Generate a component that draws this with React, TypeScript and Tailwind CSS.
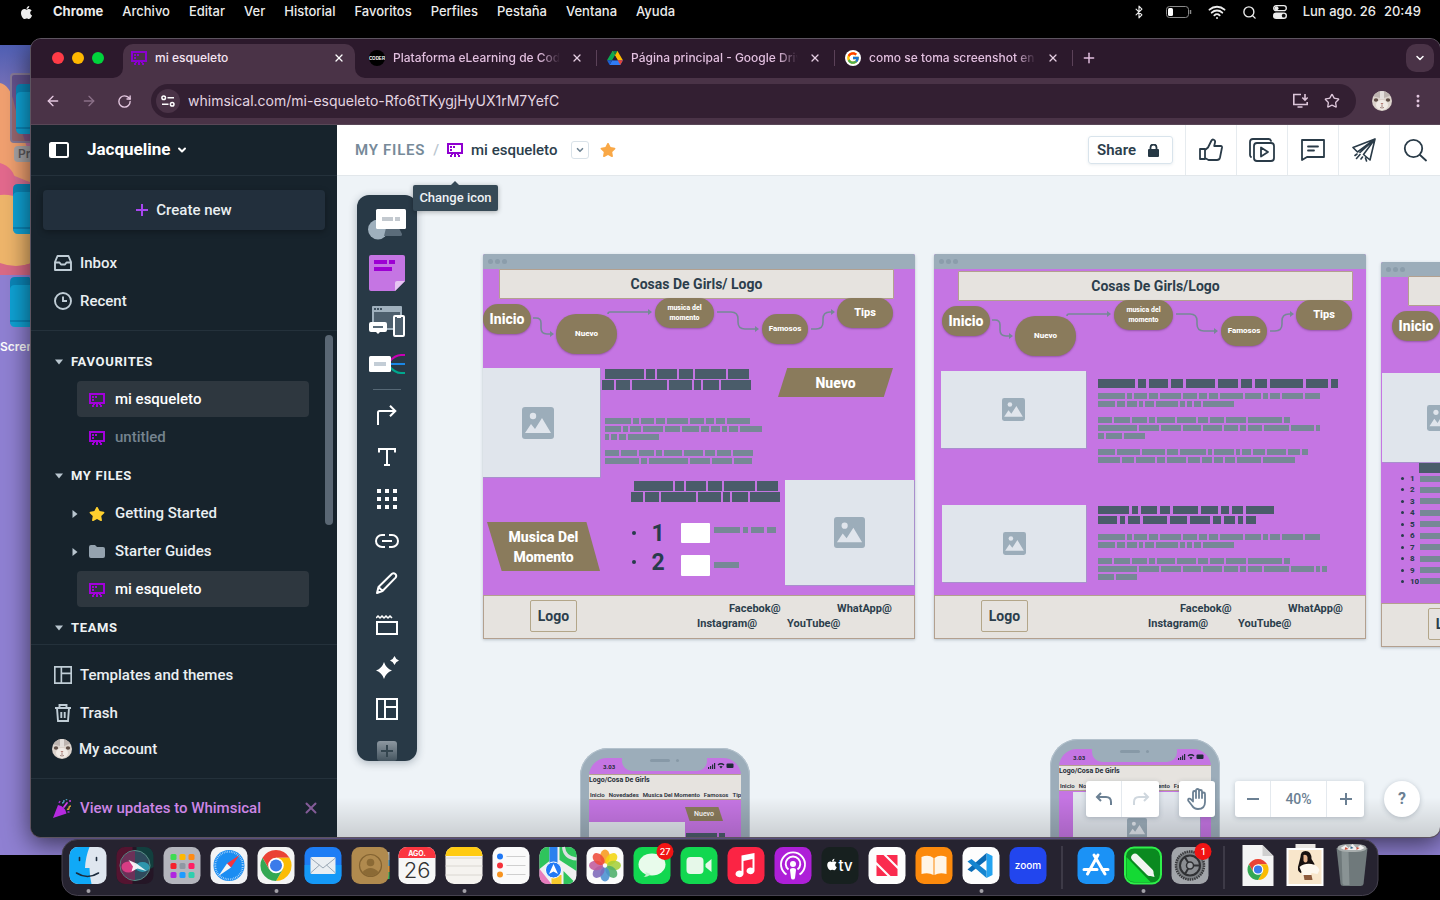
import React from "react";
import type { ReactNode } from "react";
import {
  ArrowLeft,
  ArrowRight,
  Bluetooth,
  ChevronDown,
  MoreVertical,
  Plus,
  RotateCw,
  Search,
  Star,
  Wifi,
  X,
} from "lucide-react";
import { FaApple, FaStar } from "react-icons/fa";
import { FcGoogle } from "react-icons/fc";

/* ---------- shared drawings ---------- */

function BoardIcon({ className = "" }: { className?: string }) {
  return (
    <svg viewBox="0 0 16 14" className={`h-[14px] w-4 shrink-0 ${className}`} fill="currentColor" shapeRendering="crispEdges" aria-hidden="true">
      <path fillRule="evenodd" d="M0 0h16v11H0zM2 2v7h12V2z" />
      <path d="M3 3h2v2H3zM6 3h2v2H6zM3 6h2v2H3zM4 11h2v1H5v2H3v-2h1zM7 11h2v3H7zM10 11h2v1h1v2h-2v-2h-1z" />
    </svg>
  );
}

function CatAvatar({ className = "" }: { className?: string }) {
  return (
    <svg viewBox="0 0 20 20" className={className} aria-hidden="true">
      <defs>
        <clipPath id="cat-clip"><circle cx="10" cy="10" r="10" /></clipPath>
      </defs>
      <g clipPath="url(#cat-clip)">
        <rect width="20" height="20" fill="#dcd3cc" />
        <path d="M0 0h20v4L12 7 10 3 8 7 0 5z" fill="#bdb4b0" />
        <path d="M8 0h4v8H8z" fill="#e4dfdc" />
        <ellipse cx="4" cy="9" rx="2.200" ry="1.700" fill="#5f4e46" />
        <ellipse cx="16" cy="9" rx="2.200" ry="1.700" fill="#5f4e46" />
        <ellipse cx="10" cy="14" rx="6" ry="5" fill="#f1ebe6" />
        <path d="M8.500 12h3L10 14z" fill="#b07c76" />
        <path d="M10 14v2M8 16.500q2 1 4 0" stroke="#8e6b66" strokeWidth=".8" fill="none" />
      </g>
    </svg>
  );
}

function TemplatesIcon({ className = "" }: { className?: string }) {
  return (
    <svg viewBox="0 0 22 22" className={className} fill="none" stroke="currentColor" strokeWidth="2" aria-hidden="true">
      <path d="M1 1h20v20H1zM9 1v20M9 9h12" />
    </svg>
  );
}

function ImageIcon({ className = "" }: { className?: string }) {
  return (
    <svg viewBox="0 0 32 32" className={className} aria-hidden="true">
      <rect width="32" height="32" rx="3" fill="#9cadba" />
      <circle cx="11" cy="9" r="3.200" fill="#e0e5ec" />
      <path d="M3 26l6-9 4 5 7-11 9 15z" fill="#e0e5ec" />
    </svg>
  );
}

function ChromeMark() {
  return (
    <g>
      <path d="M24 13H43.050A22 22 0 0 0 4.950 13L14.470 29.500 24 24z" fill="#ea4335" />
      <path d="M24 13H43.050A22 22 0 0 0 4.950 13L14.470 29.500 24 24z" fill="#fbbc04" transform="rotate(120 24 24)" />
      <path d="M24 13H43.050A22 22 0 0 0 4.950 13L14.470 29.500 24 24z" fill="#34a853" transform="rotate(240 24 24)" />
      <circle cx="24" cy="24" r="11" fill="#fff" />
      <circle cx="24" cy="24" r="8.500" fill="#3b7bea" />
    </g>
  );
}

/* ---------- macOS menu bar ---------- */

const MENUS = ["Archivo", "Editar", "Ver", "Historial", "Favoritos", "Perfiles", "Pestaña", "Ventana", "Ayuda"];

function MenuBar() {
  return (
    <header className="flex h-6 items-center justify-between pl-[19px] pr-[19px] text-[13px] font-medium text-[#ececec]">
      <nav className="flex items-center gap-[19px]">
        <FaApple className="size-[15px]" />
        <button className="font-bold">Chrome</button>
        {MENUS.map((m) => (
          <button key={m}>{m}</button>
        ))}
      </nav>
      <div className="flex items-center gap-4">
        <Bluetooth className="mr-1 size-[14px]" />
        <svg viewBox="0 0 26 12" className="h-3 w-[26px]" aria-hidden="true">
          <rect x=".5" y=".5" width="22" height="11" rx="3" fill="none" stroke="#8a8a8a" />
          <rect x="2" y="2" width="5" height="8" rx="1.500" fill="#fff" />
          <path d="M24.500 4v4" stroke="#8a8a8a" strokeWidth="1.500" />
        </svg>
        <Wifi className="size-[18px]" strokeWidth={2.6} />
        <Search className="size-[15px]" strokeWidth={2.2} />
        <svg viewBox="0 0 14 14" className="size-[14px]" aria-hidden="true">
          <rect x=".7" y=".7" width="12.600" height="5" rx="2.500" fill="none" stroke="#eee" strokeWidth="1.300" />
          <circle cx="3.500" cy="3.200" r="2" fill="#eee" />
          <rect y="7.500" width="14" height="6.500" rx="3.200" fill="#eee" />
          <circle cx="10.700" cy="10.700" r="1.900" fill="#111" />
        </svg>
        <time className="flex gap-2"><span>Lun ago. 26</span><span>20:49</span></time>
      </div>
    </header>
  );
}

/* ---------- desktop ---------- */

function Folder({ className }: { className: string }) {
  return (
    <svg viewBox="0 0 56 50" className={`absolute h-[50px] w-14 ${className}`} aria-hidden="true">
      <path d="M0 5q0-5 5-5h14l5 5h27q5 0 5 5v34q0 5-5 5H5q-5 0-5-5z" fill="#0b86b8" />
      <path d="M0 13q0-5 5-5h46q5 0 5 5v31q0 6-5 6H5q-5 0-5-6z" fill="#0fa2d4" />
      <path d="M0 43h56v2H0z" fill="#0b86b8" />
    </svg>
  );
}

function Desktop() {
  return (
    <div className="absolute inset-x-0 top-[45px] bottom-[45px] overflow-hidden bg-[#8f80d2]">
      <svg viewBox="0 0 32 230" className="absolute left-0 top-0 h-[230px] w-8" aria-hidden="true">
        <defs>
          <linearGradient id="sky" x1="0" y1="0" x2="0" y2="1">
            <stop offset="0" stopColor="#4f5fb4" />
            <stop offset=".2" stopColor="#7a72b8" />
            <stop offset=".5" stopColor="#d5759a" />
            <stop offset="1" stopColor="#e2607a" />
          </linearGradient>
        </defs>
        <rect width="32" height="230" fill="url(#sky)" />
        <path d="M0 38q10 2 14 20t18 60v20L0 125z" fill="#f0a070" />
        <path d="M0 118q14 4 16 20t16 20v24L0 170z" fill="#e2698d" />
        <path d="M0 150q20-2 32 14v54q-16 6-32 2z" fill="#eeb56b" />
        <path d="M0 218q16 6 32 0v12H0z" fill="#d96a86" />
      </svg>
      <div className="absolute left-[10px] top-7 h-[70px] w-20 rounded border-2 border-[#877a96] bg-[#5a3f6e]/60" />
      <Folder className="left-4 top-[39px]" />
      <Folder className="left-[13px] top-[139px]" />
      <Folder className="left-[10px] top-[232px]" />
      <span className="absolute left-[14px] top-[101px] rounded bg-[#a7a4a6] px-1 text-xs leading-4 font-semibold text-[#5b585c]">Pr</span>
      <span className="absolute left-0 top-[294px] text-xs leading-4 font-semibold text-white">Scren</span>
    </div>
  );
}

/* ---------- browser chrome ---------- */

function Tab({ icon, title }: { icon: ReactNode; title: string }) {
  return (
    <div className="flex h-7 w-[238px] items-center pl-[10px]">
      {icon}
      <button className="ml-2 w-[167px] overflow-hidden text-left whitespace-nowrap text-[#e2bfdf] [mask-image:linear-gradient(90deg,#000_88%,transparent)]">{title}</button>
      <button aria-label="Cerrar" className="ml-[11px] text-[#e6cfe3]"><X className="size-3" strokeWidth={2.6} /></button>
      <span className="ml-auto h-4 w-px bg-[#5b4158]" />
    </div>
  );
}

function TabStrip() {
  return (
    <div className="flex h-[39px] items-end bg-[#2c192c] pr-[6px] text-xs font-medium">
      <div className="mb-[14px] flex w-[92px] gap-2 pl-[21px]">
        <button aria-label="Cerrar ventana" className="size-3 rounded-full bg-[#ff3b47]" />
        <button aria-label="Minimizar" className="size-3 rounded-full bg-[#ffb800]" />
        <button aria-label="Maximizar" className="size-3 rounded-full bg-[#00d43c]" />
      </div>
      <div className="relative mr-1 flex h-[34px] w-[232px] items-center rounded-t-[10px] bg-[#4a3347] pb-[6px] pl-2">
        <svg viewBox="0 0 10 10" className="absolute -left-[10px] bottom-0 size-[10px]" aria-hidden="true"><path d="M10 0v10H0A10 10 0 0 0 10 0z" fill="#4a3347" /></svg>
        <svg viewBox="0 0 10 10" className="absolute -right-[10px] bottom-0 size-[10px]" aria-hidden="true"><path d="M0 0v10h10A10 10 0 0 1 0 0z" fill="#4a3347" /></svg>
        <BoardIcon className="text-[#8a00d0]" />
        <button className="ml-2 text-[#f5e6f3]">mi esqueleto</button>
        <button aria-label="Cerrar" className="mr-[10px] ml-auto text-white"><X className="size-3" strokeWidth={2.6} /></button>
      </div>
      <div className="flex h-[34px]">
        <Tab
          title="Plataforma eLearning de Coderhouse"
          icon={
            <svg viewBox="0 0 16 16" className="size-4 shrink-0" aria-hidden="true">
              <circle cx="8" cy="8" r="8" fill="#000" />
              <text x="8" y="9.800" textAnchor="middle" fontSize="4.500" fontWeight="900" fill="#fff" fontFamily="Liberation Sans">CODER</text>
            </svg>
          }
        />
        <Tab
          title="Página principal - Google Drive"
          icon={
            <svg viewBox="0 0 16 14" className="h-[14px] w-4 shrink-0" aria-hidden="true">
              <path d="M5.500 0h5L5.200 9.300H0z" fill="#0ca950" />
              <path d="M5.500 0h5l5.400 9.300h-5.200z" fill="#ffba00" />
              <path d="M5.500 0h5L8 4.500z" fill="#0b8043" />
              <path d="M2.600 14l2.600-4.700h10.700L13.300 14z" fill="#2f7bf5" />
              <path d="M10.700 9.300h5.200L13.300 14z" fill="#e94335" />
              <path d="M0 9.300h5.200L2.600 14z" fill="#1a5fd0" />
              <path d="M8 4.800l2.700 4.500H5.300z" fill="#2c192c" />
            </svg>
          }
        />
        <Tab
          title="como se toma screenshot en mac"
          icon={<span className="flex size-4 shrink-0 items-center justify-center rounded-full bg-white"><FcGoogle className="size-[14px]" /></span>}
        />
        <button aria-label="Nueva pestaña" className="ml-2 mb-[6px] text-[#e2bfdf]"><Plus className="size-4" strokeWidth={2.2} /></button>
      </div>
      <button aria-label="Buscar pestañas" className="mb-[6px] ml-auto flex size-7 items-center justify-center rounded-[10px] bg-[#4a3347] text-white">
        <ChevronDown className="size-3" strokeWidth={3} />
      </button>
    </div>
  );
}

function AddressBar() {
  return (
    <div className="flex h-[47px] items-center border-b border-[#594757] bg-[#4a3347] pr-[14px] pl-[14px]">
      <div className="flex w-[106px] gap-5 text-[#e4c8e0]">
        <button aria-label="Atrás"><ArrowLeft className="size-4" /></button>
        <button aria-label="Adelante" className="text-[#8b7088]"><ArrowRight className="size-4" /></button>
        <button aria-label="Recargar"><RotateCw className="size-[15px]" strokeWidth={2.2} /></button>
      </div>
      <div className="flex h-[34px] flex-1 items-center rounded-full bg-[#331f32] pr-4 pl-[5px] text-[#dcc5d9]">
        <button aria-label="Información del sitio" className="flex size-6 items-center justify-center rounded-full bg-[#4a3347] text-white">
          <svg viewBox="0 0 14 12" className="h-3 w-[14px]" fill="none" stroke="currentColor" strokeWidth="1.500" aria-hidden="true">
            <circle cx="2.700" cy="2.800" r="1.800" /><path d="M6.500 2.800H13M1 9.200h6.500" /><circle cx="11.200" cy="9.200" r="1.800" />
          </svg>
        </button>
        <input aria-label="Dirección" className="ml-2 flex-1 bg-transparent text-sm text-[#e3d5e1] outline-none" defaultValue="whimsical.com/mi-esqueleto-Rfo6tTKygjHyUX1rM7YefC" />
        <svg viewBox="0 0 16 16" className="size-4" fill="none" stroke="currentColor" strokeWidth="1.600" aria-hidden="true">
          <path d="M9 1.500H1.800v10h13.400V9M5.500 14h5M13 1v6M10.300 4.500L13 7.200l2.700-2.700" />
        </svg>
        <Star className="ml-4 size-4" />
      </div>
      <CatAvatar className="mr-[18px] ml-4 size-5" />
      <button aria-label="Más" className="text-[#e4c8e0]"><MoreVertical className="size-4" strokeWidth={2.4} /></button>
    </div>
  );
}

/* ---------- sidebar ---------- */

function Caret({ open = true }: { open?: boolean }) {
  return (
    <svg viewBox="0 0 8 8" className="size-2 shrink-0 text-[#b9c6cf]" fill="currentColor" aria-hidden="true">
      {open ? <path d="M0 1.500h8L4 6.500z" /> : <path d="M1.500 0v8l5-4z" />}
    </svg>
  );
}

function SectionTitle({ children }: { children: string }) {
  return (
    <button className="flex h-[38px] shrink-0 items-center gap-2 pt-px pl-6 text-[13px] font-bold tracking-wider text-[#eef2f4]">
      <Caret />
      {children}
    </button>
  );
}

function FileRow({ active = false, dim = false, children }: { active?: boolean; dim?: boolean; children: string }) {
  return (
    <a href="#file" className={`my-px ml-[46px] flex h-9 w-[232px] shrink-0 items-center gap-[10px] rounded pt-px pl-3 ${active ? "bg-[#2e373f] text-white" : ""} ${dim ? "text-[#75838f]" : ""}`}>
      <BoardIcon className="text-[#a200db]" />
      {children}
    </a>
  );
}

function NavLink({ icon, children }: { icon: ReactNode; children: string }) {
  return (
    <a href="#nav" className="flex h-[38px] items-center gap-2 pl-[23px]">
      <span className="flex w-[18px] justify-center text-[#c0cdd6]">{icon}</span>
      {children}
    </a>
  );
}

function Sidebar() {
  return (
    <aside className="flex w-[306px] shrink-0 flex-col bg-[#17232c] text-[15px] font-medium text-[#eaeff2]">
      <div className="flex h-[51px] shrink-0 items-center border-b border-[#24313b] pl-[18px] text-white">
        <button aria-label="Ocultar barra lateral">
          <svg viewBox="0 0 20 16" className="h-4 w-5" aria-hidden="true">
            <rect x="1" y="1" width="18" height="14" rx="1.500" fill="none" stroke="#fff" strokeWidth="2" />
            <path d="M1 1h6v14H1z" fill="#fff" />
          </svg>
        </button>
        <button className="ml-[18px] flex items-center gap-1.5 text-[17px] font-bold">
          Jacqueline
          <ChevronDown className="size-3" strokeWidth={4} />
        </button>
      </div>
      <button className="mx-3 mt-[14px] flex h-10 shrink-0 items-center justify-center gap-2 rounded bg-[#222f3c] shadow-[0_2px_6px_rgba(0,0,0,0.3)]">
        <svg viewBox="0 0 12 12" className="size-3" aria-hidden="true">
          <path d="M6 0v12M0 6h12" stroke="#a846f0" strokeWidth="2" />
        </svg>
        Create new
      </button>
      <nav className="mt-[14px] border-b border-[#24313b] pb-[10px]">
        <NavLink icon={
          <svg viewBox="0 0 18 16" className="h-4 w-[18px]" fill="none" stroke="currentColor" strokeWidth="1.900" strokeLinejoin="round" aria-hidden="true">
            <path d="M1 7L3.500 1h11L17 7v8H1zM1 7.500h4.500l1.500 2h4l1.500-2H17" />
          </svg>
        }>Inbox</NavLink>
        <NavLink icon={
          <svg viewBox="0 0 18 18" className="size-[18px]" fill="none" stroke="currentColor" strokeWidth="1.900" aria-hidden="true">
            <circle cx="9" cy="9" r="8" /><path d="M9 4.500V9h4" />
          </svg>
        }>Recent</NavLink>
      </nav>
      <div className="relative flex min-h-0 flex-1 flex-col items-start overflow-hidden pt-[11px]">
        <SectionTitle>FAVOURITES</SectionTitle>
        <FileRow active>mi esqueleto</FileRow>
        <FileRow dim>untitled</FileRow>
        <SectionTitle>MY FILES</SectionTitle>
        <a href="#started" className="flex h-[38px] shrink-0 items-center pt-px pl-10">
          <Caret open={false} />
          <FaStar className="mr-[10px] ml-[10px] size-4 text-[#ffd02e]" />
          Getting Started
        </a>
        <a href="#guides" className="flex h-[38px] shrink-0 items-center pt-px pl-10">
          <Caret open={false} />
          <svg viewBox="0 0 16 13" className="mr-[10px] ml-[10px] h-[13px] w-4" aria-hidden="true"><path d="M0 2q0-2 2-2h4l2 2h6q2 0 2 2v7q0 2-2 2H2q-2 0-2-2z" fill="#94a2ae" /></svg>
          Starter Guides
        </a>
        <FileRow active>mi esqueleto</FileRow>
        <SectionTitle>TEAMS</SectionTitle>
        <div className="absolute right-1 top-1 h-[190px] w-2 rounded-full bg-[#5a6774]" />
      </div>
      <nav className="border-t border-[#24313b] pt-[11px] pb-3">
        <NavLink icon={<TemplatesIcon className="size-[18px]" />}>Templates and themes</NavLink>
        <NavLink icon={
          <svg viewBox="0 0 18 18" className="size-[18px]" fill="none" stroke="currentColor" strokeWidth="1.900" aria-hidden="true">
            <path d="M1 4h16M5.500 4V1h7v3M3 4l1 13h10l1-13M7.300 8v6M10.700 8v6" />
          </svg>
        }>Trash</NavLink>
        <a href="#account" className="flex h-[34px] items-center gap-[7px] pl-[21px]">
          <CatAvatar className="size-5" />
          My account
        </a>
      </nav>
      <div className="flex h-[59px] shrink-0 items-center border-t border-[#24313b] pl-[22px] text-[#cd86e6]">
        <svg viewBox="0 0 19 19" className="size-[19px]" fill="none" aria-hidden="true">
          <path d="M5 6q7 1 8.500 8.500L0 19z" fill="#b52ae0" />
          <path d="M6 4l1-2M14.500 13l2 0" stroke="#a030d0" strokeWidth="1.500" />
          <path d="M9 4q2 0 2-3M13 1l1-1" stroke="#4e95b5" strokeWidth="1.500" />
          <path d="M11 8l3-4M17 2h.1" stroke="#d33ce8" strokeWidth="1.800" strokeLinecap="round" />
          <path d="M14 10q2 1 2-1t2-2" stroke="#d2a13a" strokeWidth="1.500" />
        </svg>
        <a href="#updates" className="ml-2">View updates to Whimsical</a>
        <button aria-label="Close" className="mr-[17px] ml-auto text-[#845c98]"><X className="size-[18px]" strokeWidth={2.6} /></button>
      </div>
    </aside>
  );
}

/* ---------- document top bar ---------- */

function TopCell({ label, children }: { label: string; children: ReactNode }) {
  return (
    <button aria-label={label} className="flex w-[51px] items-center justify-center border-l border-[#e6ebef] text-[#2a3b48]">
      {children}
    </button>
  );
}

function TopBar() {
  const line = { fill: "none", stroke: "currentColor", strokeWidth: 1.8, strokeLinejoin: "round" as const, strokeLinecap: "round" as const };
  return (
    <div className="flex h-[51px] shrink-0 justify-between border-b border-[#e2e7eb] bg-white pl-[18px] text-[15px] font-medium text-[#2c3e4c]">
      <div className="flex items-center">
        <a href="#files" className="font-semibold tracking-wider text-[#778a99]">MY FILES</a>
        <span className="mx-2 text-[#b9c6d0]">/</span>
        <button aria-label="Change icon" className="text-[#8f00d0]"><BoardIcon /></button>
        <span className="ml-2">mi esqueleto</span>
        <button aria-label="File menu" className="ml-[14px] flex size-[18px] items-center justify-center rounded-[3px] border border-[#d9e2e9] text-[#6f8494]">
          <ChevronDown className="size-[10px]" strokeWidth={4} />
        </button>
        <button aria-label="Favourite" className="ml-[11px] text-[#f9a847]"><FaStar className="size-4" /></button>
      </div>
      <div className="flex">
        <button className="mt-[11px] mr-3 flex h-7 items-center gap-3 rounded-[3px] border border-[#d9e4ec] pr-3 pl-2 font-semibold shadow-[0_1px_3px_rgba(60,90,120,0.1)]">
          Share
          <svg viewBox="0 0 12 13" className="h-[13px] w-3" aria-hidden="true">
            <rect y="5" width="11" height="8" rx="1" fill="#263845" />
            <path d="M2.500 6V3.500a3 3 0 0 1 6 0V6" fill="none" stroke="#263845" strokeWidth="1.800" />
          </svg>
        </button>
        <TopCell label="Like">
          <svg viewBox="0 0 24 24" className="size-6" {...line}>
            <path d="M1 11h5v10H1zM6 12l3-2.500 3.500-7q.8-1.500 2.300-.8 1.700.8 1.200 2.800L15.200 8H22q1.200.2 1 1.500L21 19.500q-.6 2.500-3 2.500H9.500L6 20" />
          </svg>
        </TopCell>
        <TopCell label="Present">
          <svg viewBox="0 0 26 24" className="h-6 w-[26px]" {...line}>
            <rect x="5" y="5" width="20" height="18" rx="3" />
            <path d="M2 19q-1-.7-1-2V4q0-3 3-3h15.500q1.800 0 2.500 1.800M12 9.500v9l7-4.500z" />
          </svg>
        </TopCell>
        <TopCell label="Comments">
          <svg viewBox="0 0 24 22" className="h-[22px] w-6" {...line}>
            <path d="M1 1h22v17H6l-5 3zM7 7.500h10M7 11.500h6" />
          </svg>
        </TopCell>
        <TopCell label="Send">
          <svg viewBox="0 0 24 24" className="size-6" {...line} strokeWidth={1.600}>
            <path d="M23 1L1 9.500l4.500 4.500zM23 1l-5 21-6.500-5.500zM23 1L8 14.500M5 16l-2 1.500M8 16.500l-3.500 4M10.500 19l-1.500 2M13.500 20l1 3" />
          </svg>
        </TopCell>
        <TopCell label="Search">
          <svg viewBox="0 0 24 24" className="size-6" {...line}>
            <circle cx="10.500" cy="10.500" r="8.700" /><path d="M17 17l6 5.500" />
          </svg>
        </TopCell>
      </div>
    </div>
  );
}

/* ---------- tool palette ---------- */

function Tool({ label, children }: { label: string; children: ReactNode }) {
  return <button aria-label={label} className="flex h-[42px] w-full shrink-0 items-center justify-center">{children}</button>;
}

function Palette() {
  const big = "flex h-[49px] w-full shrink-0 items-center justify-center";
  const s = { fill: "none", stroke: "#fff", strokeWidth: 2 };
  return (
    <div className="absolute left-5 top-[19px] flex h-[566px] w-[60px] flex-col items-center overflow-hidden rounded-xl bg-[#283946] pt-1 shadow-[0_2px_8px_rgba(20,40,60,0.3)]">
      <button aria-label="Shapes" className={big}>
        <svg viewBox="0 0 38 32" className="h-8 w-[38px]" aria-hidden="true">
          <circle cx="10" cy="21.500" r="10" fill="#9fb0bd" />
          <path d="M18 20h13l3 6q.5 2-1.500 2H16z" fill="#5b6c7a" />
          <rect x="8" y="1" width="30" height="20" rx="1.500" fill="#fff" />
          <path d="M14 9h11v4H14zM27 9h5v4h-5z" fill="#c3c9cf" />
        </svg>
      </button>
      <button aria-label="Sticky note" className={big}>
        <svg viewBox="0 0 36 36" className="size-9" aria-hidden="true">
          <path d="M2 0h32q2 0 2 2v24L26 36H2q-2 0-2-2V2q0-2 2-2z" fill="#c575e3" />
          <path d="M26 36v-8q0-2 2-2h8z" fill="#e6c5f2" />
          <path d="M5 5h13v4H5zM20 5h6v4h-6zM5 12h18v4H5z" fill="#9d00d3" />
        </svg>
      </button>
      <button aria-label="Wireframe" className={big}>
        <svg viewBox="0 0 36 31" className="h-[31px] w-9" aria-hidden="true">
          <rect x="3" width="30" height="24" rx="1" fill="#9fb0bd" />
          <path d="M5 6h26v16H5z" fill="#4d5f6d" />
          <path d="M5 2h2v2H5zM8 2h2v2H8zM11 2h2v2h-2z" fill="#405361" />
          <path d="M2 16h14q2 0 2 2v6q0 2-2 2h-5l-2 2-2-2H2q-2 0-2-2v-6q0-2 2-2z" fill="#fff" />
          <path d="M4 20h10v2H4z" fill="#5b6c7a" />
          <rect x="25" y="10" width="10" height="20" rx="1" fill="#4d5f6d" stroke="#fff" strokeWidth="2" />
          <path d="M28 10h4v2h-4z" fill="#fff" />
        </svg>
      </button>
      <button aria-label="Mind map" className="flex h-9 w-full shrink-0 items-center justify-center">
        <svg viewBox="0 0 36 20" className="h-5 w-9" fill="none" strokeWidth="2" aria-hidden="true">
          <path d="M20 8q6-7 12-7h4" stroke="#c800b4" />
          <path d="M20 10h16" stroke="#1b87e5" />
          <path d="M20 12q6 7 12 7h4" stroke="#00a88e" />
          <rect y="2" width="22" height="16" rx="1.500" fill="#fff" />
          <path d="M5 8h12v4H5z" fill="#c3cdd6" />
        </svg>
      </button>
      <div className="mt-[7px] mb-1 h-px w-7 shrink-0 bg-[#566875]" />
      <Tool label="Connector">
        <svg viewBox="0 0 20 20" className="size-5" {...s}><path d="M1 20V7.500q0-1.500 1.500-1.500H18M13 .8L18.300 6 13 11.200" /></svg>
      </Tool>
      <Tool label="Text">
        <svg viewBox="0 0 18 18" className="size-[18px]" {...s}><path d="M1 4.500V1h16v3.500M9 1v16M6 17h6" /></svg>
      </Tool>
      <Tool label="Icons">
        <svg viewBox="0 0 20 20" className="size-5" fill="#fff"><path d="M0 0h4v4H0zM8 0h4v4H8zM16 0h4v4h-4zM0 8h4v4H0zM8 8h4v4H8zM16 8h4v4h-4zM0 16h4v4H0zM8 16h4v4H8zM16 16h4v4h-4z" /></svg>
      </Tool>
      <Tool label="Link">
        <svg viewBox="0 0 24 14" className="h-[14px] w-6" {...s}><path d="M10 1H7a6 6 0 0 0 0 12h3M14 1h3a6 6 0 0 1 0 12h-3M7 7h10" /></svg>
      </Tool>
      <Tool label="Draw">
        <svg viewBox="0 0 22 22" className="size-[22px]" {...s} strokeLinejoin="round"><path d="M1 21l1.500-6L16 1.800q1.600-1.200 3.300.3t.3 3.500L6.500 19zM2.500 15L6.500 19" /></svg>
      </Tool>
      <Tool label="Section">
        <svg viewBox="0 0 22 20" className="h-5 w-[22px]" {...s}><path d="M1 7h20v12H1z" /><path d="M0 3l2-2 2 2 2-2 2 2 2-2 2 2 2-2 2 2" strokeWidth="1.500" /></svg>
      </Tool>
      <Tool label="AI">
        <svg viewBox="0 0 23 23" className="size-[23px]" fill="#fff"><path d="M8 6q2 6.500 8 8.500-6 2-8 8.500-2-6.500-8-8.500 6-2 8-8.500zM18.500 0q1.200 3.300 4.500 4.500-3.300 1.200-4.500 4.500-1.200-3.300-4.500-4.500 3.300-1.200 4.500-4.500z" /></svg>
      </Tool>
      <Tool label="Templates"><TemplatesIcon className="size-[22px] text-white" /></Tool>
      <Tool label="More">
        <svg viewBox="0 0 20 20" className="size-5">
          <defs>
            <linearGradient id="fade" x1="0" y1="0" x2="0" y2="1"><stop offset="0" stopColor="#8d98a1" /><stop offset="1" stopColor="#44545f" /></linearGradient>
          </defs>
          <rect width="20" height="20" rx="3" fill="url(#fade)" /><path d="M10 4v12M4 10h12" stroke="#34454f" strokeWidth="2" />
        </svg>
      </Tool>
    </div>
  );
}

/* ---------- wireframe boards ---------- */

type Rows = number[][];

const HEAD_A: Rows = [[39, 9, 20, 14, 31, 21], [12, 14, 35, 23, 7, 16, 30]];
const BODY_A: Rows = [
  [26, 6, 13, 9, 21, 14, 8, 9, 23],
  [16, 5, 11, 20, 15, 17, 8, 9, 5, 9, 22],
  [4, 6, 7, 31],
  [],
  [14, 16, 15, 6, 18, 19, 10, 14, 20],
  [34, 6, 39, 20, 20, 18],
];
const HEAD_B: Rows = [[37, 8, 19, 12, 29, 20, 11, 12, 33, 22, 7]];
const BODY_B: Rows = [
  [27, 5, 13, 9, 21, 14, 8, 9, 23, 16, 5, 10, 21, 15],
  [17, 8, 10, 4, 9, 22, 5, 5, 7, 31],
  [],
  [14, 16, 15, 6, 18, 19, 10, 14, 20, 34, 6],
  [39, 20, 20, 18, 19, 14, 6, 14, 25, 23, 4],
  [6, 16, 21],
  [],
  [17, 23, 23, 11, 26, 4, 20, 4, 9, 12, 19, 12, 6],
  [22, 12, 19, 8, 19, 12, 10, 9, 10, 24, 32],
];
const HEAD_C: Rows = [[31, 6, 16, 10, 25, 17, 8, 11, 28], [19, 5, 12, 24, 17, 20, 8, 11, 5, 10]];
const BODY_C: Rows = [
  BODY_B[0],
  BODY_B[1],
  [],
  BODY_B[3],
  [39, 20, 20, 18, 19, 14, 6, 14, 25, 23, 4, 5],
  [16, 21],
];

function Words({ rows, bar, row = "gap-0.5", className }: { rows: Rows; bar: string; row?: string; className: string }) {
  return (
    <div className={`absolute flex flex-col ${className}`}>
      {rows.map((r, i) => (
        <div key={i} className={`flex ${row}`}>
          {r.length === 0 && <span className={`${bar} w-0`} />}
          {r.map((w, j) => (
            <span key={j} className={bar} style={{ width: w }} />
          ))}
        </div>
      ))}
    </div>
  );
}

const DARK10 = "h-[10px] bg-[#4a5c6a]";
const DARK8 = "h-2 bg-[#4a5c6a]";
const GREY = "h-1.5 bg-[#768896]";

function Pill({ className, children }: { className: string; children: string }) {
  return (
    <div className={`absolute flex items-center justify-center rounded-[20px] bg-[#8a7b5c] text-center font-extrabold text-white shadow-[0_1px_2px_rgba(60,30,60,0.35)] ${className}`}>
      {children}
    </div>
  );
}

function Flow({ className }: { className: string }) {
  return (
    <div className={`absolute h-14 w-[410px] ${className}`}>
      <Pill className="left-0 top-[6px] h-[30px] w-12 text-sm">Inicio</Pill>
      <Pill className="left-[73px] top-4 h-10 w-[61px] text-[8px]">Nuevo</Pill>
      <Pill className="left-[172px] top-0 h-[30px] w-[59px] px-2 text-[7px] leading-[10px]">musica del momento</Pill>
      <Pill className="left-[279px] top-4 h-[30px] w-[46px] text-[8px]">Famosos</Pill>
      <Pill className="left-[354px] top-0 h-[30px] w-14 text-[11px]">Tips</Pill>
      <svg viewBox="0 0 410 56" className="absolute inset-0 h-14 w-[410px]" fill="none" stroke="#768896" strokeWidth="1.600" aria-hidden="true">
        <path d="M50 20h3q5 0 5 5v5q0 6 6 6h4M125 16q0-2 2-2h39M234 14h14q7 0 7 7v3q0 7 7 7h11M328 31h5q7 0 7-7v-3q0-7 7-7h2" />
        <path d="M67 33v6l4-3zM165 11v6l4-3zM272 28v6l4-3zM348 11v6l4-3z" fill="#768896" stroke="none" />
      </svg>
    </div>
  );
}

function Placeholder({ className, icon }: { className: string; icon: string }) {
  return (
    <div className={`absolute flex items-center justify-center bg-[#e0e5ec] shadow-[1px_1px_0_rgba(150,160,190,0.6)] ${className}`}>
      <ImageIcon className={icon} />
    </div>
  );
}

function Footer() {
  return (
    <div className="absolute inset-x-0 bottom-0 h-11 border border-[#b3a08f] bg-[#e6e3df] text-[11px] leading-3 font-bold text-[#2c3e4c]">
      <div className="absolute left-[46px] top-1 flex h-8 w-[47px] items-center justify-center rounded-[2px] border border-[#b3a689] text-sm">Logo</div>
      <span className="absolute left-[245px] top-[7px]">Facebok@</span>
      <span className="absolute left-[353px] top-[7px]">WhatApp@</span>
      <span className="absolute left-[213px] top-[22px]">Instagram@</span>
      <span className="absolute left-[303px] top-[22px]">YouTube@</span>
    </div>
  );
}

function Board({ className, children }: { className: string; children: ReactNode }) {
  return (
    <section className={`absolute h-[385px] w-[432px] overflow-hidden rounded-t-[2px] bg-[#c575e3] shadow-[0_1px_3px_rgba(60,80,100,0.3)] ${className}`}>
      <div className="flex h-[15px] items-center gap-0.5 bg-[#9cadba] pl-[5px]">
        <span className="size-[5px] rounded-full bg-[#8b9dab]" />
        <span className="size-[5px] rounded-full bg-[#8b9dab]" />
        <span className="size-[5px] rounded-full bg-[#8b9dab]" />
      </div>
      {children}
      <Footer />
    </section>
  );
}

function Banner({ className, children }: { className: string; children: string }) {
  return (
    <h2 className={`absolute flex h-[30px] w-[395px] items-center justify-center rounded-[1px] border border-[#b3a08f] bg-[#e6e3df] text-sm font-bold text-[#2c3e4c] ${className}`}>
      {children}
    </h2>
  );
}

const LIST = [1, 2, 3, 4, 5, 6, 7, 8, 9, 10];

function Boards() {
  return (
    <>
      <Board className="left-[146px] top-[78px]">
        <Banner className="left-4 top-[15px]">Cosas De Girls/ Logo</Banner>
        <Flow className="left-0 top-11" />
        <Placeholder className="-left-[7px] top-[114px] h-[109px] w-[124px]" icon="size-8" />
        <Words rows={HEAD_A} bar={DARK10} className="left-[119px] top-[115px] items-center gap-px" />
        <Words rows={BODY_A} bar={GREY} className="left-[122px] top-[164px] gap-0.5" />
        <div className="absolute left-[295px] top-[114px] flex h-[29px] w-[115px] items-center justify-center bg-[#8a7b5c] text-sm font-extrabold text-white [clip-path:polygon(8%_0,100%_0,92%_100%,0_100%)]">Nuevo</div>
        <Words rows={HEAD_A} bar={DARK10} className="left-[148px] top-[227px] items-center gap-px" />
        <Placeholder className="left-[302px] top-[226px] h-[105px] w-[129px]" icon="size-[31px]" />
        <div className="absolute left-1 top-[268px] flex h-[49px] w-[113px] items-center justify-center bg-[#8a7b5c] px-4 text-center text-sm leading-5 font-extrabold text-white [clip-path:polygon(0_0,88%_0,100%_100%,13%_100%)]">Musica Del Momento</div>
        <div className="absolute left-[149px] top-[265px] flex w-20 flex-col gap-px text-[#273c4c]">
          {["1", "2"].map((n) => (
            <div key={n} className="flex h-7 items-center">
              <span className="size-1 rounded-full bg-[#273c4c]" />
              <span className="ml-3 w-5 pt-0.5 text-center text-[23px] font-bold">{n}</span>
            </div>
          ))}
        </div>
        <div className="absolute left-[198px] top-[269px] h-5 w-[29px] rounded-[1px] bg-white" />
        <div className="absolute left-[198px] top-[301px] h-[21px] w-[29px] rounded-[1px] bg-white" />
        <Words rows={[[26, 5, 13, 9]]} bar={GREY} row="gap-[3px]" className="left-[231px] top-[273px]" />
        <Words rows={[[25]]} bar={GREY} className="left-[231px] top-[308px]" />
      </Board>

      <Board className="left-[597px] top-[78px]">
        <Banner className="left-6 top-[17px]">Cosas De Girls/Logo</Banner>
        <Flow className="left-[8px] top-[46px]" />
        <Placeholder className="left-[7px] top-[117px] h-[77px] w-[145px]" icon="size-[23px]" />
        <Placeholder className="left-2 top-[251px] h-[77px] w-36" icon="size-[23px]" />
        <Words rows={HEAD_B} bar="h-[9px] bg-[#4a5c6a]" row="gap-[3px]" className="left-[164px] top-[125px]" />
        <Words rows={BODY_B} bar={GREY} className="left-[164px] top-[139px] gap-0.5" />
        <Words rows={HEAD_C} bar={DARK8} row="gap-[3px]" className="left-[164px] top-[252px] gap-0.5" />
        <Words rows={BODY_C} bar={GREY} className="left-[164px] top-[280px] gap-0.5" />
      </Board>

      <Board className="left-[1044px] top-[86px]">
        <Banner className="left-[27px] top-[14px]">Cosas De Girls/Logo</Banner>
        <Flow className="left-[11px] top-[43px]" />
        <Placeholder className="left-px top-[111px] h-[89px] w-[115px]" icon="size-[26px]" />
        <div className="absolute left-[38px] top-[201px] h-[10px] w-24 bg-[#4a5c6a]" />
        <ol className="absolute left-5 top-[211px] flex h-[114px] flex-col justify-between text-[8px] leading-[11px] font-extrabold text-[#273c4c]">
          {LIST.map((n) => (
            <li key={n} className="flex h-[11px] items-center">
              <span className="size-[3px] rounded-full bg-[#273c4c]" />
              <span className="ml-1.5 w-[10px]">{n}</span>
              <span className="h-1.5 w-20 bg-[#768896]" />
            </li>
          ))}
        </ol>
      </Board>
    </>
  );
}

function Phone({ className, children }: { className: string; children: ReactNode }) {
  return (
    <section className={`absolute h-[340px] w-[170px] rounded-[28px] bg-[#9cadba] px-[9px] pt-[10px] text-[#1f2c37] shadow-[inset_0_0_0_1px_#b3c1cc] ${className}`}>
      <div className="relative h-full overflow-hidden rounded-[18px] bg-[#c575e3]">
        <div className="flex h-4 items-center justify-between pr-[7px] pl-[14px]">
          <span className="text-[6px] font-bold">3.03</span>
          <svg viewBox="0 0 26 6" className="h-[6px] w-[26px]" fill="currentColor" aria-hidden="true">
            <path d="M0 4h1.200v2H0zM2 3h1.200v3H2zM4 1.500h1.200V6H4zM6 0h1.200v6H6zM9.500 1.500q3.500-2.800 7 0l-1 1q-2.500-2-5 0zM11.300 3.500q1.700-1.200 3.400 0L13 5.500z" />
            <rect x="18.500" y=".5" width="7" height="4.500" rx="1" />
          </svg>
        </div>
        <div className="absolute left-[33px] top-0 flex h-[13px] w-[85px] items-start justify-center gap-1.5 rounded-b-[10px] bg-[#9cadba] pt-px">
          <span className="h-[3px] w-5 rounded-full bg-[#8799a7]" />
          <span className="size-[3px] rounded-full bg-[#8799a7]" />
        </div>
        <div className="h-[26px] border-y border-[#b3a08f] bg-[#e6e3df] leading-[10px] font-bold whitespace-nowrap">
          <p className="text-[7px]">Logo/Cosa De Girls</p>
          <p className="mt-1.5 flex gap-1 pl-px text-[6px] leading-[8px] font-semibold">
            <span>Inicio</span><span>Novedades</span><span>Musica Del Momento</span><span>Famosos</span><span>Tips</span>
          </p>
        </div>
        {children}
      </div>
    </section>
  );
}

function BottomControls() {
  const card = "flex h-9 items-center rounded-[3px] bg-white shadow-[0_1px_5px_rgba(40,60,80,0.25)]";
  return (
    <div className="absolute right-5 bottom-5 flex gap-5 text-[#6b8093]">
      <div className={`${card} divide-x divide-[#e4e9ee]`}>
        <button aria-label="Undo" className="flex h-full w-9 items-center justify-center">
          <svg viewBox="0 0 18 14" className="h-[14px] w-[18px]" fill="none" stroke="currentColor" strokeWidth="2"><path d="M6 1L2 5l4 4M2 5h9q5 0 5 5v3" /></svg>
        </button>
        <button aria-label="Redo" className="flex h-full w-[37px] items-center justify-center text-[#cfd7de]">
          <svg viewBox="0 0 18 14" className="h-[14px] w-[18px]" fill="none" stroke="currentColor" strokeWidth="2"><path d="M12 1l4 4-4 4M16 5H7q-5 0-5 5v3" /></svg>
        </button>
      </div>
      <button aria-label="Pan" className={`${card} w-9 justify-center`}>
        <svg viewBox="0 0 22 22" className="size-[22px]" fill="none" stroke="currentColor" strokeWidth="1.800" strokeLinecap="round" strokeLinejoin="round">
          <path d="M7 11V4.500a1.500 1.500 0 0 1 3 0V10M10 9V2.500a1.500 1.500 0 0 1 3 0V10M13 9V3.500a1.500 1.500 0 0 1 3 0V10M16 9V6a1.500 1.500 0 0 1 3 0v8q0 7-7 7-4 0-6-3.500L2.500 13q-1-1.700.5-2.300 1.200-.4 2 .7L7 13.500V9" />
        </svg>
      </button>
      <div className={`${card} divide-x divide-[#e4e9ee]`}>
        <button aria-label="Zoom out" className="flex h-full w-9 items-center justify-center"><svg viewBox="0 0 12 12" className="size-3"><path d="M0 6h12" stroke="currentColor" strokeWidth="2" /></svg></button>
        <button className="h-full w-14 text-sm font-medium">40%</button>
        <button aria-label="Zoom in" className="flex h-full w-[37px] items-center justify-center"><svg viewBox="0 0 12 12" className="size-3"><path d="M0 6h12M6 0v12" stroke="currentColor" strokeWidth="2" /></svg></button>
      </div>
      <button aria-label="Help" className="size-9 rounded-full bg-white text-base font-bold shadow-[0_1px_5px_rgba(40,60,80,0.25)]">?</button>
    </div>
  );
}

function Canvas() {
  return (
    <div className="relative min-h-0 flex-1 overflow-hidden bg-[#eef3f7]">
      <Boards />
      <Phone className="left-[243px] top-[572px]">
        <div className="absolute left-[96px] top-[49px] flex h-[14px] w-[38px] items-center justify-center bg-[#8a7b5c] text-[7px] font-medium text-white [clip-path:polygon(0_0,88%_0,100%_100%,12%_100%)]">Nuevo</div>
        <div className="absolute left-0 top-16 h-20 w-[96px] bg-[#e0e5ec]" />
        <Words rows={[[31, 6]]} bar={DARK10} className="left-[97px] top-[75px]" />
      </Phone>
      <Phone className="left-[713px] top-[563px]">
        <Placeholder className="left-[14px] top-[43px] h-[71px] w-[127px]" icon="size-5" />
      </Phone>
      <div className="pointer-events-none absolute inset-x-0 bottom-0 h-10 bg-gradient-to-t from-black/15 to-transparent" />
      <Palette />
      <div role="tooltip" className="absolute left-[76px] top-[9px] flex h-[26px] w-[85px] items-center justify-center rounded-[2px] bg-[#364956] text-[13px] font-medium text-[#eef2f5] shadow-[0_1px_5px_rgba(0,0,0,0.3)]">
        <svg viewBox="0 0 10 5" className="absolute -top-1 left-[37px] h-[5px] w-[10px]" aria-hidden="true"><path d="M0 5l5-5 5 5z" fill="#364956" /></svg>
        Change icon
      </div>
      <BottomControls />
    </div>
  );
}

/* ---------- dock ---------- */

function Petals() {
  const colors = ["#f79a1c", "#f2d50f", "#a5cf3a", "#4fae6a", "#4a90d0", "#7d68b8", "#c05a9c", "#ee4a3a"];
  return (
    <g>
      {colors.map((c, i) => (
        <ellipse key={c} cx="18.500" cy="9.500" rx="4.800" ry="7" fill={c} opacity=".88" transform={`rotate(${i * 45} 18.500 18.500)`} />
      ))}
    </g>
  );
}

function Tile({ fill, children }: { fill: string; children?: ReactNode }) {
  return (
    <>
      <rect width="37" height="37" rx="8.500" fill={fill} />
      {children}
    </>
  );
}

type App = { name: string; art: ReactNode; running?: boolean; badge?: string };

const APPS: App[] = [
  {
    name: "Finder", running: true,
    art: (
      <Tile fill="#dfe6ef">
        <path d="M8.500 0H20q-4 10-4.500 21h4.500q0 8 2 16H8.500A8.500 8.500 0 0 1 0 28.500v-20A8.500 8.500 0 0 1 8.500 0z" fill="#10a9f7" />
        <path d="M10 10.500v3M27 10.500v3M7 26q11 7 22 0" stroke="#1c2b3c" strokeWidth="1.600" strokeLinecap="round" fill="none" />
      </Tile>
    ),
  },
  {
    name: "Siri",
    art: (
      <Tile fill="#241626">
        <path d="M0 8.500A8.500 8.500 0 0 1 8.500 0H16v37H8.500A8.500 8.500 0 0 1 0 28.500z" fill="#6a1434" opacity=".7" />
        <path d="M20 0h8.500A8.500 8.500 0 0 1 37 8.500V20L20 30z" fill="#0b5148" opacity=".7" />
        <circle cx="18.500" cy="18.500" r="15" fill="#2f4a5c" stroke="#5b9088" />
        <path d="M18.500 4a14.500 14.500 0 0 0 0 29z" fill="#7c2a58" opacity=".8" />
        <ellipse cx="12" cy="20" rx="7" ry="5.500" fill="#ea3f8c" opacity=".85" />
        <ellipse cx="26" cy="20" rx="7" ry="5" fill="#2fb0c8" opacity=".75" />
        <path d="M12 13l8 3.500 10 7.500-9-2.500-6 3 1.500-5z" fill="#fff" opacity=".9" />
      </Tile>
    ),
  },
  {
    name: "Launchpad",
    art: (
      <Tile fill="#b4b5bd">
        {["#3ddb52", "#ffb800", "#ff8a14", "#f5222d", "#8f98a3", "#ff1f64", "#b026e0", "#1f9bff", "#2fcfae"].map((c, i) => (
          <rect key={c} x={7 + (i % 3) * 9} y={7 + Math.floor(i / 3) * 9} width="6" height="6" rx="1.500" fill={c} />
        ))}
      </Tile>
    ),
  },
  {
    name: "Safari",
    art: (
      <Tile fill="#f2f3f5">
        <circle cx="18.500" cy="18.500" r="15.500" fill="#1b8df2" />
        <circle cx="18.500" cy="18.500" r="13.800" fill="none" stroke="#cfe6fb" strokeWidth="2" strokeDasharray=".6 1.200" />
        <path d="M29 8L20.500 20.500l-4-4z" fill="#f5333f" />
        <path d="M8 29l8.500-12.500 4 4z" fill="#f5f5f5" />
      </Tile>
    ),
  },
  { name: "Chrome", running: true, art: <Tile fill="#f4f4f4"><g transform="translate(1.500 1.500) scale(.708)"><ChromeMark /></g></Tile> },
  {
    name: "Mail",
    art: (
      <Tile fill="#1d7df5">
        <path d="M0 18h37v10.500a8.500 8.500 0 0 1-8.500 8.500h-20A8.500 8.500 0 0 1 0 28.500z" fill="#12a5f8" opacity=".7" />
        <rect x="6" y="10" width="25" height="17" rx="1.500" fill="#e9eef2" />
        <path d="M6 11l12.500 10L31 11M6 26l9-8M31 26l-9-8" fill="none" stroke="#9aa8b5" />
      </Tile>
    ),
  },
  {
    name: "Contactos",
    art: (
      <>
        <path d="M33 5h5v8h-5z" fill="#a9b0b5" /><path d="M33 13h5v6h-5z" fill="#38a5e0" /><path d="M33 19h5v6h-5z" fill="#f09a28" /><path d="M33 25h5v7h-5z" fill="#31b95a" />
        <Tile fill="#b08a4e">
          <circle cx="19" cy="18.500" r="11" fill="none" stroke="#836331" strokeWidth="1.200" />
          <circle cx="19" cy="15.500" r="3.800" fill="#8b6a35" /><path d="M11 25q8-8 16 0-3 4-8 4t-8-4z" fill="#8b6a35" />
        </Tile>
      </>
    ),
  },
  {
    name: "Calendario",
    art: (
      <Tile fill="#f7f7f7">
        <path d="M8.500 0h20A8.500 8.500 0 0 1 37 8.500V11H0V8.500A8.500 8.500 0 0 1 8.500 0z" fill="#fb3640" />
        <text x="18.500" y="8.800" textAnchor="middle" fontSize="7" fontWeight="700" fill="#fff">AGO.</text>
        <text x="18.500" y="31" textAnchor="middle" fontSize="22" fontWeight="300" fill="#333">26</text>
      </Tile>
    ),
  },
  {
    name: "Notas", running: true,
    art: (
      <Tile fill="#f5f3ef">
        <path d="M8.500 0h20A8.500 8.500 0 0 1 37 8.500V9H0v-.5A8.500 8.500 0 0 1 8.500 0z" fill="#ffcb12" />
        <path d="M0 11h37" stroke="#b9b5ae" strokeDasharray="1 1" /><path d="M0 19h37M0 28h37" stroke="#dad7d1" />
      </Tile>
    ),
  },
  {
    name: "Recordatorios",
    art: (
      <Tile fill="#fafafa">
        <path d="M14 9.500h19M14 18.500h19M14 27.500h19" stroke="#cfcfcf" />
        <circle cx="7.500" cy="9.500" r="3" fill="#1f78f5" /><circle cx="7.500" cy="18.500" r="3" fill="#f5303a" /><circle cx="7.500" cy="27.500" r="3" fill="#f79420" />
      </Tile>
    ),
  },
  {
    name: "Mapas",
    art: (
      <Tile fill="#f0f0f0">
        <path d="M8.500 0H10v14L0 22V8.500A8.500 8.500 0 0 1 8.500 0z" fill="#2fc45c" />
        <path d="M20 0h8.500Q37 0 37 8.500V24L20 13z" fill="#2fc45c" />
        <path d="M10 0h8v18h-8z" fill="#2a80ee" />
        <path d="M0 22l12 15H8.500Q0 37 0 28.500z" fill="#e77bbd" /><path d="M12 28h10v9H12z" fill="#f7c92c" /><path d="M24 24l10 10q-2 3-6 3h-4z" fill="#2fc45c" />
        <path d="M24 0q1 11 13 12" fill="none" stroke="#dcdfe2" strokeWidth="3" />
        <circle cx="14" cy="23" r="8" fill="#2179f5" stroke="#fff" /><path d="M14 17l4.500 10-4.500-2.500L9.500 27z" fill="#fff" />
      </Tile>
    ),
  },
  { name: "Fotos", art: <Tile fill="#fbfbfb"><Petals /></Tile> },
  {
    name: "Mensajes", badge: "27",
    art: (
      <Tile fill="#12d750">
        <ellipse cx="18.500" cy="17.500" rx="13.500" ry="11" fill="#e8fbeb" /><path d="M12 25q1 4-2 5 5 0 7-3z" fill="#c8f2d0" />
      </Tile>
    ),
  },
  {
    name: "FaceTime",
    art: <Tile fill="#12d750"><rect x="6" y="10" width="17" height="17" rx="4" fill="#e6f8e9" /><path d="M25 17l6-5v13l-6-5z" fill="#e6f8e9" /></Tile>,
  },
  {
    name: "Música",
    art: <Tile fill="#fb2444"><path d="M14 8.500L27 6v18a4 3.300 0 1 1-2-3V12l-9 2v13a4 3.300 0 1 1-2-3z" fill="#fff" /></Tile>,
  },
  {
    name: "Podcasts",
    art: (
      <Tile fill="#ae1fd8">
        <g fill="none" stroke="#fff" strokeWidth="1.900"><path d="M12 27.500a12 12 0 1 1 13 0" /><path d="M14 22.500a7.300 7.300 0 1 1 9 0" /></g>
        <circle cx="18.500" cy="17" r="3" fill="#fff" /><path d="M15.500 23q0-2 3-2t3 2l-1 8q-.3 1.500-2 1.500t-2-1.500z" fill="#fff" />
      </Tile>
    ),
  },
  {
    name: "TV",
    art: (
      <Tile fill="#17201f">
        <g transform="translate(4 11)"><FaApple size={13} color="#fff" /></g>
        <text x="17" y="23.500" fontSize="15" fontWeight="500" fill="#fff">tv</text>
      </Tile>
    ),
  },
  {
    name: "News",
    art: (
      <Tile fill="#fdfdfd">
        <path d="M8 8h7l14 14v7h-7L8 15z" fill="#fa2b4e" /><path d="M18 8h11v11zM8 18v11h11z" fill="#fa2b4e" />
      </Tile>
    ),
  },
  {
    name: "Libros",
    art: <Tile fill="#fc8a0c"><path d="M18 11q-5-4-12-1v17q7-2 12 1zM19 11q5-4 12-1v17q-7-2-12 1z" fill="#fff5e6" /></Tile>,
  },
  {
    name: "Code", running: true,
    art: (
      <Tile fill="#fdfdfd">
        <path d="M24 6l6 3v19l-6 3z" fill="#23a3f0" />
        <path d="M24 6v7L9 25l-4-2.500z" fill="#0a6bb5" /><path d="M24 31v-7L9 12l-4 2.500z" fill="#1585d0" />
      </Tile>
    ),
  },
  {
    name: "Zoom",
    art: <Tile fill="#2246ee"><text x="18.500" y="21.500" textAnchor="middle" fontSize="10" fontWeight="500" fill="#fff">zoom</text></Tile>,
  },
];

const TOOLS: App[] = [
  {
    name: "App Store",
    art: (
      <Tile fill="#1b92f6">
        <path d="M20.500 8L10 27M16.500 8l11 19M6.500 22.500h13M24.500 22.500h6" stroke="#fff" strokeWidth="3" strokeLinecap="round" />
      </Tile>
    ),
  },
  {
    name: "Corel", running: true,
    art: (
      <>
        <rect x=".5" y=".5" width="36" height="36" rx="9" fill="#0a8a20" stroke="#2ef04a" strokeWidth="2" />
        <path d="M2 10l24 25H10q-8 0-8-8z" fill="#14d934" />
        <path d="M10.500 10.500L25 25" stroke="#f0f5f0" strokeWidth="7.500" strokeLinecap="round" />
        <path d="M24 28.500l4.500-4.500 1.500 6z" fill="#f0f5f0" />
      </>
    ),
  },
  {
    name: "Ajustes", badge: "1",
    art: (
      <Tile fill="#a2a5aa">
        <circle cx="18.500" cy="18.500" r="14" fill="#7d8084" stroke="#38393c" strokeWidth="2.500" strokeDasharray="1.500 .8" />
        <circle cx="18.500" cy="18.500" r="10" fill="#8b8e92" stroke="#303134" strokeWidth="2" />
        <path d="M18.500 18.500l-5-8M18.500 18.500h10M18.500 18.500l-5 8.500" stroke="#303134" strokeWidth="2" />
        <circle cx="18.500" cy="18.500" r="3.500" fill="#9da0a4" stroke="#303134" strokeWidth="1.500" />
      </Tile>
    ),
  },
];

const FILES: App[] = [
  {
    name: "Documento",
    art: (
      <>
        <path d="M3-2h20l11 11v30H3z" fill="#f4f4f4" /><path d="M23-2l11 11H23z" fill="#cfcfcf" />
        <g transform="translate(7 11) scale(.480)"><ChromeMark /></g>
      </>
    ),
  },
  {
    name: "Imágenes",
    art: (
      <>
        <path d="M9-3h20v5H9z" fill="#e9e6e2" />
        <path d="M0 1h37v38H0z" fill="#fff" /><path d="M2 3h33v34H2z" fill="#f8e6cb" />
        <path d="M14 10q0-6 5-6 6 0 6 8l3 5q-1 6-6 4l-8 5q-4-3-2-8z" fill="#17100f" />
        <path d="M17 8q3-1 4 2v4q-2 3-4 0z" fill="#e5b38f" />
        <path d="M13 20q5-4 12-3 6 1 8 6l-2 4-6-1-1 4h-7z" fill="#fdf7ee" /><path d="M17 28h8l1 5h-8z" fill="#8c5a3c" />
      </>
    ),
  },
  {
    name: "Papelera",
    art: (
      <>
        <path d="M3 1h31l-4 36q-.3 2-3 2H10q-2.700 0-3-2z" fill="#6f797b" />
        <path d="M8 4h7l1 34h-5q-2 0-2-2z" fill="#a3adae" opacity=".5" />
        <path d="M4 1q0-4 14.500-4T33 1q0 4-14.500 4T4 1z" fill="#a8aeae" />
        <path d="M7 1l5-3 3 3 4-4 4 4 4-3 4 3-4 2H11z" fill="#f0f0f0" /><path d="M12 0l3 2-4 1zM23 0l3 1-3 2z" fill="#c8503c" /><path d="M17-1l3 2-3 1z" fill="#356a8a" />
      </>
    ),
  },
];

function DockItem({ app }: { app: App }) {
  return (
    <button aria-label={app.name} className="relative flex w-[47px] flex-col items-center pt-[7px]">
      <svg viewBox="0 0 37 37" className="size-[37px] overflow-visible">{app.art}</svg>
      {app.running && <span className="mt-[5px] size-1 rounded-full bg-[#a3a1a8]" />}
      {app.badge && (
        <span className="absolute top-[3px] right-0.5 flex size-[17px] items-center justify-center rounded-full bg-[#f11414] text-[9px] font-medium text-white">{app.badge}</span>
      )}
    </button>
  );
}

function Dock() {
  const sep = <span className="mx-[10px] my-[6px] w-px bg-[#55525e]" />;
  return (
    <div className="absolute bottom-1 left-1/2 flex h-[57px] -translate-x-1/2 rounded-2xl border border-[#46424f] bg-[#262330] px-0.5">
      {APPS.map((a) => <DockItem key={a.name} app={a} />)}
      {sep}
      {TOOLS.map((a) => <DockItem key={a.name} app={a} />)}
      {sep}
      {FILES.map((a) => <DockItem key={a.name} app={a} />)}
    </div>
  );
}

export default function App() {
  return (
    <div className="relative h-screen overflow-hidden bg-black font-['Inter',sans-serif]">
      <MenuBar />
      <Desktop />
      <main className="absolute top-[38px] -right-px bottom-[62px] left-[30px] flex flex-col overflow-hidden rounded-[11px] border border-[#5d5460] bg-[#2c192c] shadow-[0_6px_26px_rgba(0,0,0,0.6)]">
        <TabStrip />
        <AddressBar />
        <div className="flex min-h-0 flex-1 font-['Roboto',sans-serif]">
          <Sidebar />
          <div className="flex min-w-0 flex-1 flex-col">
            <TopBar />
            <Canvas />
          </div>
        </div>
      </main>
      <Dock />
    </div>
  );
}
